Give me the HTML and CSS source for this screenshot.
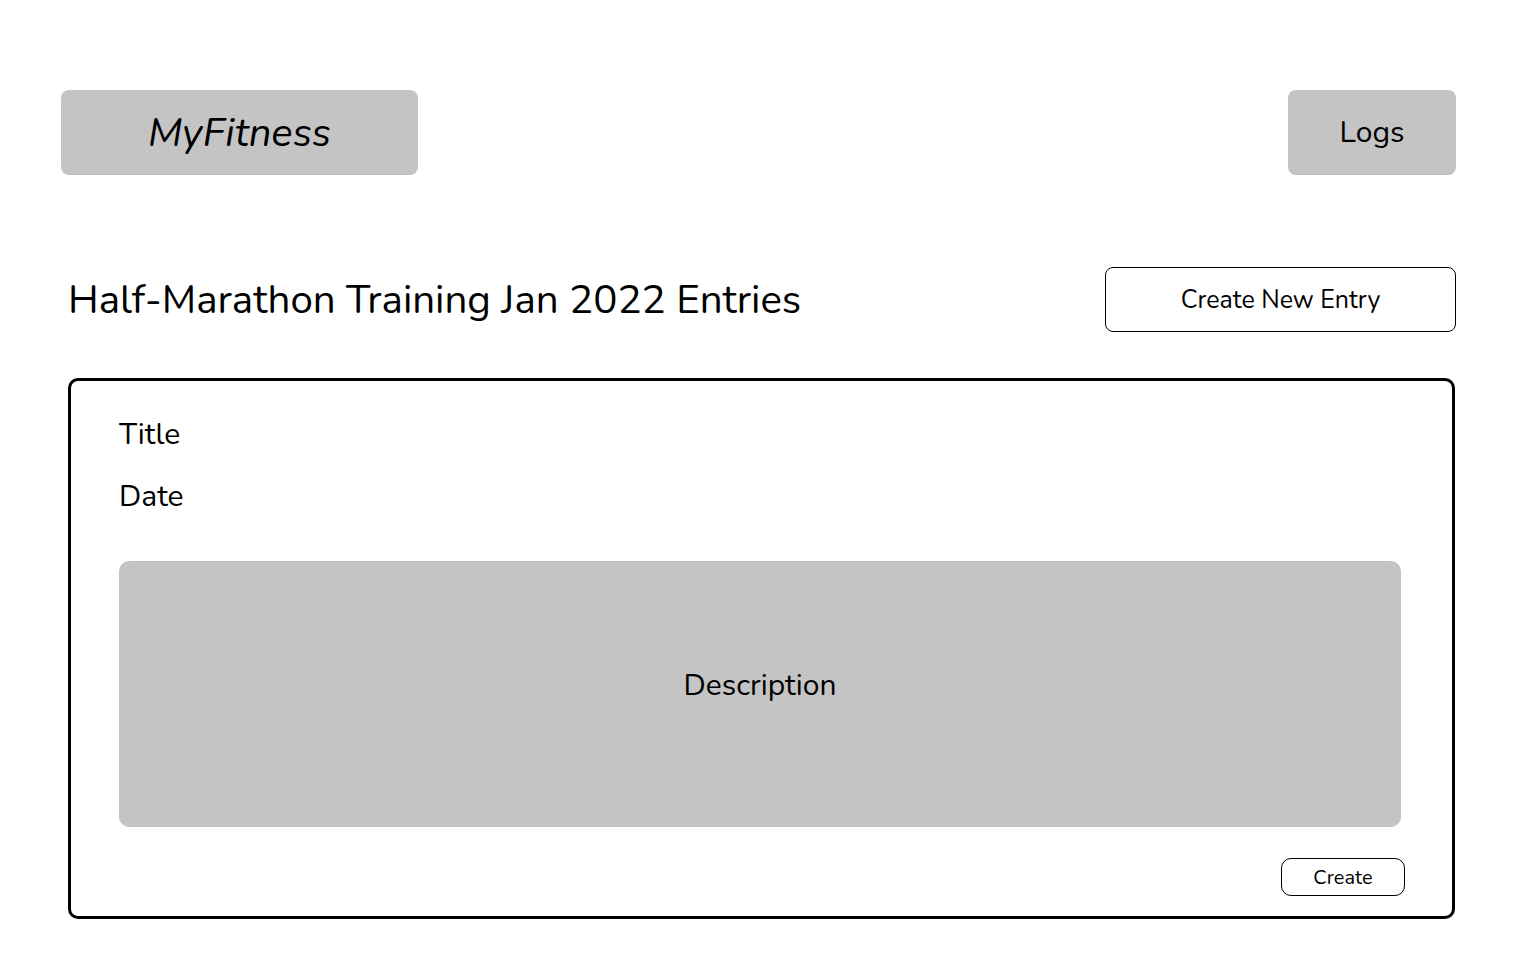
FILE: index.html
```html
<!DOCTYPE html>
<html lang="en">
<head>
<meta charset="utf-8">
<title>MyFitness</title>
<link rel="stylesheet" href="styles.css">
</head>
<body>
<div class="page">
  <header class="topbar">
    <div class="logo">MyFitness</div>
    <div class="nav-btn">Logs</div>
  </header>
  <div class="title-row">
    <h1 class="heading">Half-Marathon Training Jan 2022 Entries</h1>
    <button class="new-entry">Create New Entry</button>
  </div>
  <section class="card">
    <div class="field">Title</div>
    <div class="field date">Date</div>
    <div class="description">Description</div>
    <div class="actions">
      <button class="create">Create</button>
    </div>
  </section>
</div>
</body>
</html>
```
FILE: styles.css
```css
* { box-sizing: border-box; }
body {
  margin: 0;
  background: #ffffff;
  font-family: "Nunito", "Lato", "Open Sans", sans-serif;
  color: #000;
}
.page {
  padding: 90px 60px 0 61px;
}
.topbar {
  display: flex;
  justify-content: space-between;
  align-items: center;
}
.logo {
  width: 357px;
  height: 85px;
  background: #c4c4c4;
  border-radius: 8px;
  display: flex;
  align-items: center;
  justify-content: center;
  font-style: italic;
  font-size: 40px;
}
.nav-btn {
  width: 168px;
  height: 85px;
  background: #c4c4c4;
  border-radius: 8px;
  display: flex;
  align-items: center;
  justify-content: center;
  font-size: 30px;
}
.title-row {
  margin-top: 92px;
  padding-left: 7px;
  display: flex;
  justify-content: space-between;
  align-items: center;
}
.heading {
  margin: 0;
  font-weight: 400;
  font-size: 40.3px;
}
.new-entry {
  width: 351px;
  height: 65px;
  background: #fff;
  border: 1px solid #000;
  border-radius: 8px;
  font-family: inherit;
  font-size: 25px;
  color: #000;
}
.card {
  margin-top: 46px;
  margin-left: 7px;
  margin-right: 1px;
  border: 3px solid #000;
  border-radius: 10px;
  padding: 36px 51px 20px 48px;
}
.field {
  font-size: 30px;
  line-height: 36px;
}
.date {
  margin-top: 26px;
}
.description {
  margin-top: 46px;
  height: 266px;
  background: #c4c4c4;
  border-radius: 10px;
  display: flex;
  align-items: center;
  justify-content: center;
  font-size: 30px;
  padding-bottom: 18px;
}
.actions {
  margin-top: 31px;
  margin-right: -4px;
  display: flex;
  justify-content: flex-end;
}
.create {
  width: 124px;
  height: 38px;
  background: #fff;
  border: 1px solid #000;
  border-radius: 10px;
  font-family: inherit;
  font-size: 20px;
  color: #000;
  padding: 0;
}
```
